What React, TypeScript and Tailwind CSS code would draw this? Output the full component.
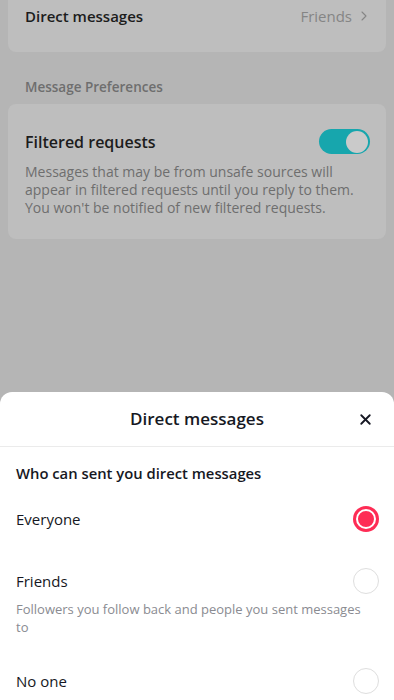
import { X, ChevronRight } from "lucide-react";

const font = { fontFamily: "'Open Sans', 'Liberation Sans', sans-serif" };

function Radio({ checked }: { checked?: boolean }) {
  if (checked) {
    return (
      <div className="w-[26px] h-[26px] rounded-full bg-[#fe2c55] flex items-center justify-center">
        <div className="w-[20px] h-[20px] rounded-full border-2 border-white bg-[#fe2c55]" />
      </div>
    );
  }
  return <div className="w-[26px] h-[26px] rounded-full border-[1.5px] border-[#dedede]" />;
}

export default function App() {
  return (
    <div className="relative h-[700px] w-full overflow-hidden bg-[#b5b5b5]" style={font}>
      {/* background settings page (dimmed) */}
      <div className="px-2">
        <div className="rounded-b-lg bg-[#bebebe] pt-[4px] pb-[24px] pl-[17px] pr-[14px] flex items-center justify-between">
          <span className="text-[15px] leading-6 font-semibold text-[#1c1c1c]">Direct messages</span>
          <span className="flex items-center gap-1 text-[15px] leading-6 text-[#858585]">
            Friends
            <ChevronRight className="w-4 h-4" strokeWidth={1.6} />
          </span>
        </div>

        <div className="pl-[17px] pt-[25px] pb-[7px] text-[13.5px] leading-5 font-semibold text-[#6e6e6e]">
          Message Preferences
        </div>

        <div className="rounded-lg bg-[#bebebe] pl-[17px] pr-[16px] pt-[25px] pb-[22px]">
          <div className="flex items-center justify-between">
            <span className="text-[16px] leading-6 font-semibold text-[#1c1c1c]">Filtered requests</span>
            <div className="w-[51px] h-[25px] rounded-full bg-[#17a6ad] flex items-center justify-end pr-[2px]">
              <div className="w-[22px] h-[22px] rounded-full bg-[#cacaca]" />
            </div>
          </div>
          <p className="mt-[9px] text-[14px] leading-[18px] text-[#6e6e6e]">
            Messages that may be from unsafe sources will appear in filtered requests until you reply to them. You won't be notified of new filtered requests.
          </p>
        </div>
      </div>

      {/* bottom sheet */}
      <div className="absolute left-0 right-0 top-[392px] bottom-0 bg-white rounded-t-[12px]">
        <div className="relative h-[55px] flex items-center justify-center border-b border-[#ebebeb]">
          <span className="text-[17px] font-semibold text-[#161823]">Direct messages</span>
          <X className="absolute right-[20px] top-[19px] w-[17px] h-[17px] text-[#161823]" strokeWidth={2.6} />
        </div>
        <div className="pl-4 pr-[15px]">
          <div className="pt-[16px] text-[14.8px] leading-5 font-semibold text-[#161823]">
            Who can sent you direct messages
          </div>
          <div className="mt-[23px] flex items-center justify-between h-[26px]">
            <span className="text-[15px] text-[#161823]">Everyone</span>
            <Radio checked />
          </div>
          <div className="mt-[36px] flex items-center justify-between h-[26px]">
            <span className="text-[15px] text-[#161823]">Friends</span>
            <Radio />
          </div>
          <p className="mt-[6px] max-w-[355px] text-[13px] leading-[18px] text-[#8a8b91]">
            Followers you follow back and people you sent messages to
          </p>
          <div className="mt-[32px] flex items-center justify-between h-[26px]">
            <span className="text-[15px] text-[#161823]">No one</span>
            <Radio />
          </div>
        </div>
      </div>
    </div>
  );
}
